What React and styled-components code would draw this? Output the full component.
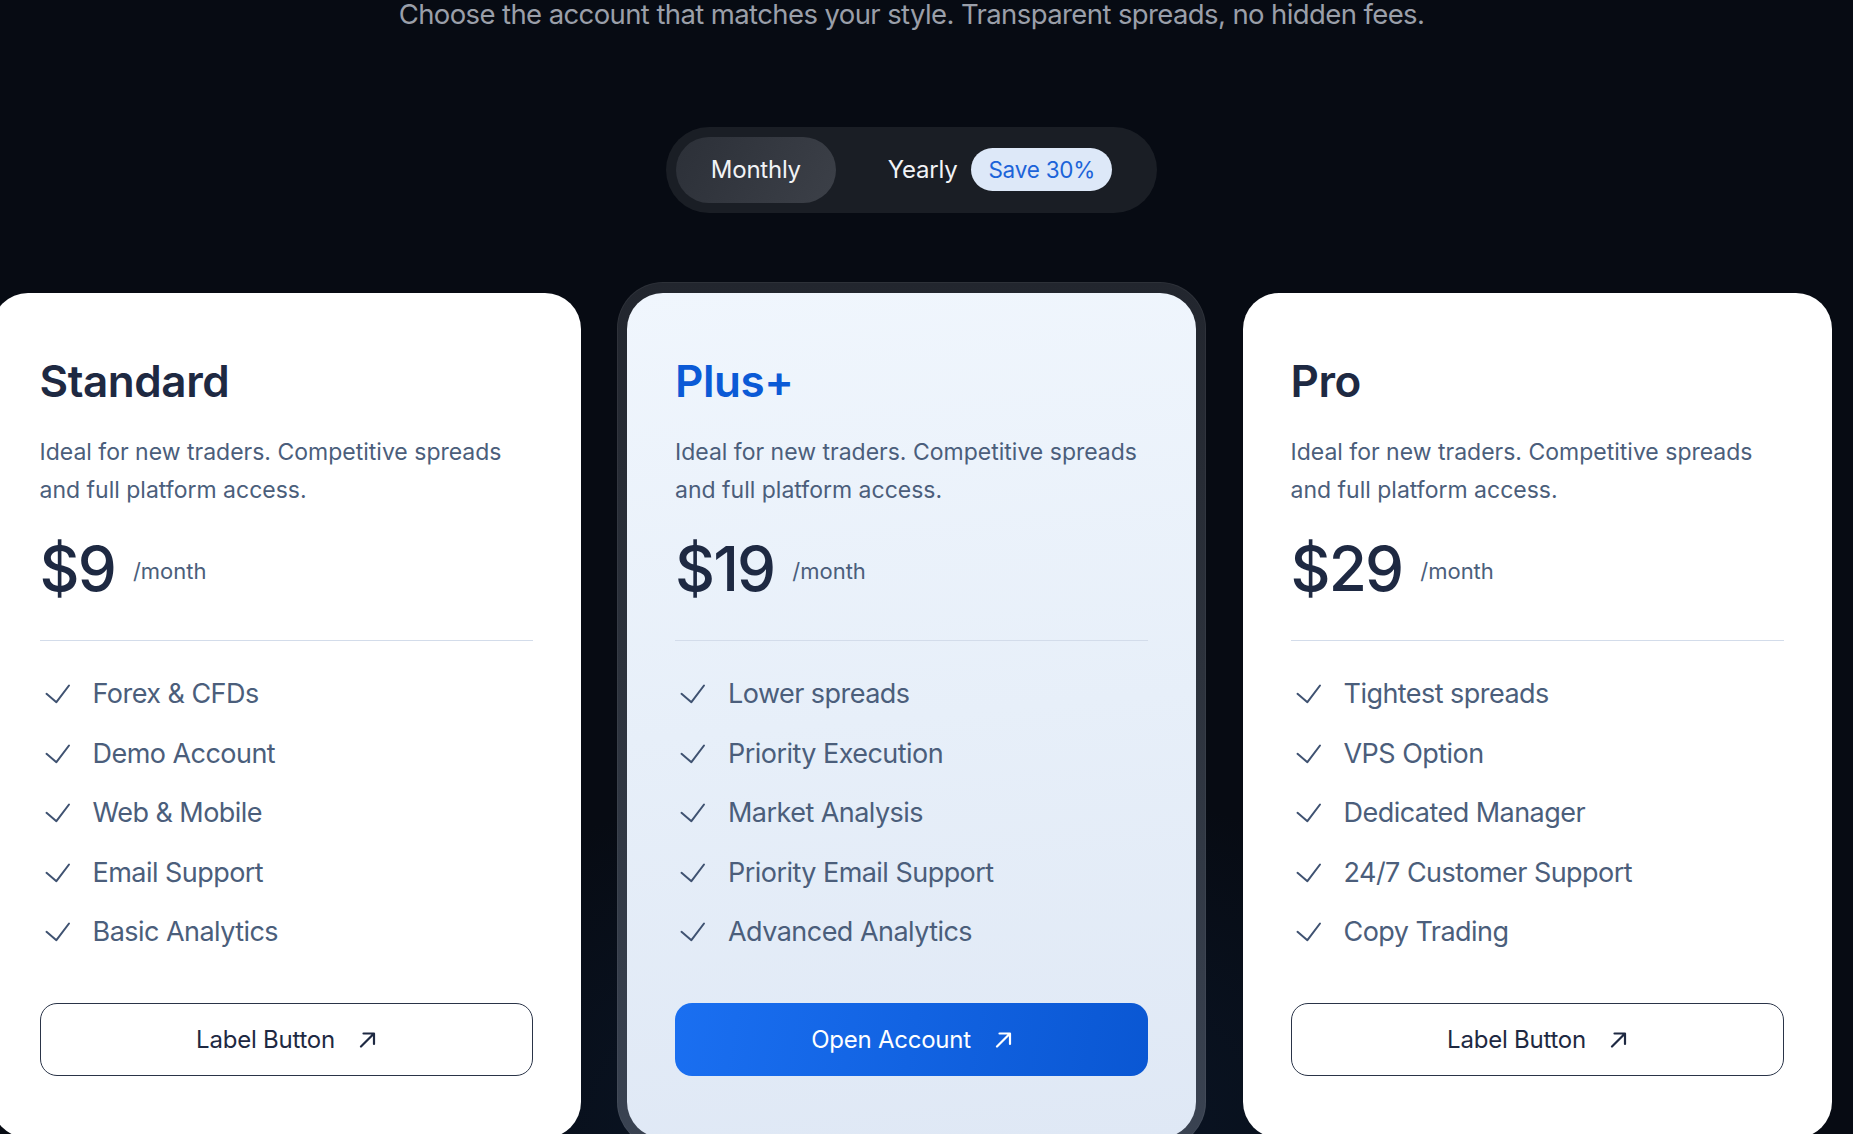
import React from "react";
import styled, { createGlobalStyle } from "styled-components";

const Global = createGlobalStyle`
  html, body {
    margin: 0;
    padding: 0;
    height: 1134px;
    overflow: hidden;
    background: #070b13;
  }
  body {
    font-family: Inter, "Noto Sans", "Liberation Sans", sans-serif;
    -webkit-font-smoothing: antialiased;
  }
  * { box-sizing: border-box; }
`;

const Page = styled.main`
  width: 1853px;
  height: 1134px;
  overflow: hidden;
  display: flex;
  flex-direction: column;
  align-items: center;
  padding-right: 30px;
  background:
    radial-gradient(ellipse 900px 520px at 50% 100%, rgba(14, 34, 62, 0.55), rgba(7, 11, 19, 0) 70%),
    #070b13;
`;

const Subtitle = styled.p`
  margin: 1px 0 0;
  font-size: 27.5px;
  line-height: 1;
  color: #9a9fa9;
  letter-spacing: -0.022em;
  white-space: nowrap;
`;

const Toggle = styled.div`
  margin-top: 98px;
  display: flex;
  align-items: center;
  gap: 17px;
  padding: 10px;
  height: 86px;
  border-radius: 43px;
  background: #1a1e25;
`;

const Pill = styled.button`
  height: 66px;
  display: flex;
  align-items: center;
  gap: 14px;
  padding: 0 35px;
  border: none;
  border-radius: 33px;
  font-family: inherit;
  font-size: 24px;
  font-weight: 400;
  letter-spacing: -0.01em;
  color: #f1f3f6;
  background: ${(p) =>
    p.$active ? "linear-gradient(120deg, #2c3038, #3c4048)" : "transparent"};
`;

const Badge = styled.span`
  display: inline-flex;
  align-items: center;
  height: 43px;
  padding: 0 17px;
  border-radius: 22px;
  background: #dde8f8;
  color: #1b63d9;
  font-size: 22.5px;
  font-weight: 400;
  letter-spacing: -0.01em;
`;

const Grid = styled.section`
  margin-top: 69px;
  flex-shrink: 0;
  width: 1840px;
  display: grid;
  grid-template-columns: repeat(3, 589px);
  column-gap: 36.5px;
  align-items: start;
`;

const Frame = styled.div`
  padding: 11px 10px 10px;
  border-radius: 46px;
  background: linear-gradient(180deg, #22262e 0%, #2c323c 45%, #3a4352 100%);
  box-shadow: inset 0 0 0 1px rgba(255, 255, 255, 0.05);
`;

const Card = styled.article`
  display: flex;
  flex-direction: column;
  padding: 62px 48px 62px;
  border-radius: 36px;
  background: ${(p) =>
    p.$featured
      ? "linear-gradient(175deg, #f0f6fd 0%, #e7eff9 50%, #dfe8f5 100%)"
      : "#ffffff"};
  margin-top: ${(p) => (p.$featured ? "0" : "11px")};
`;

const Title = styled.h2`
  margin: 0;
  font-size: 44px;
  line-height: 1.2;
  font-weight: 600;
  letter-spacing: -0.01em;
  color: ${(p) => (p.$featured ? "#0b5ad6" : "#1e2942")};
`;

const Description = styled.p`
  margin: 27px 0 0;
  font-size: 23px;
  line-height: 37.6px;
  color: #4b5e7b;
  letter-spacing: 0;
`;

const PriceRow = styled.div`
  margin-top: 29px;
  display: flex;
  align-items: center;
  gap: 18px;
  padding-bottom: 40px;
  border-bottom: 1px solid #d3dcea;
`;

const Price = styled.span`
  font-size: 62px;
  line-height: 1;
  font-weight: 500;
  color: #1e2942;
  letter-spacing: -0.03em;
`;

const Period = styled.span`
  font-size: 22px;
  color: #4b5e7b;
  padding-top: 4px;
`;

const FeatureList = styled.ul`
  list-style: none;
  margin: 32px 0 0;
  padding: 0;
  display: flex;
  flex-direction: column;
  gap: 17.5px;
`;

const Feature = styled.li`
  display: flex;
  align-items: center;
  gap: 21px;
  font-size: 27px;
  line-height: 42px;
  color: #4b5e7b;
  letter-spacing: -0.02em;
`;

const ActionButton = styled.button`
  margin-top: 50px;
  height: 73px;
  width: 100%;
  display: flex;
  align-items: center;
  justify-content: center;
  gap: 24px;
  border-radius: 17px;
  font-family: inherit;
  font-size: 24px;
  font-weight: 400;
  letter-spacing: -0.01em;
  cursor: pointer;
  border: ${(p) => (p.$primary ? "none" : "1.5px solid #2a3448")};
  color: ${(p) => (p.$primary ? "#ffffff" : "#1e2942")};
  background: ${(p) =>
    p.$primary ? "linear-gradient(100deg, #1a6ff1 0%, #0a57d3 100%)" : "transparent"};
`;

const CheckIcon = () => (
  <svg width="32" height="32" viewBox="0 0 32 32" fill="none" aria-hidden="true">
    <path
      d="M6.5 15.8 L16.4 24.2 L29 7.5"
      stroke="#3f5271"
      strokeWidth="2"
      strokeLinecap="round"
      strokeLinejoin="round"
    />
  </svg>
);

const ArrowIcon = () => (
  <svg width="17" height="17" viewBox="0 0 17 17" fill="none" aria-hidden="true">
    <path
      d="M2 15.5 L14.5 3 M4.5 2.5 H15 V13"
      stroke="currentColor"
      strokeWidth="2.2"
      strokeLinecap="round"
      strokeLinejoin="round"
    />
  </svg>
);

const plans = [
  {
    name: "Standard",
    price: "$9",
    features: ["Forex & CFDs", "Demo Account", "Web & Mobile", "Email Support", "Basic Analytics"],
    cta: "Label Button",
  },
  {
    name: "Plus+",
    price: "$19",
    featured: true,
    features: [
      "Lower spreads",
      "Priority Execution",
      "Market Analysis",
      "Priority Email Support",
      "Advanced Analytics",
    ],
    cta: "Open Account",
  },
  {
    name: "Pro",
    price: "$29",
    features: [
      "Tightest spreads",
      "VPS Option",
      "Dedicated Manager",
      "24/7 Customer Support",
      "Copy Trading",
    ],
    cta: "Label Button",
  },
];

const PlanCard = ({ plan }) => (
  <Card $featured={plan.featured}>
    <Title $featured={plan.featured}>{plan.name}</Title>
    <Description>
      Ideal for new traders. Competitive spreads and full platform access.
    </Description>
    <PriceRow>
      <Price>{plan.price}</Price>
      <Period>/month</Period>
    </PriceRow>
    <FeatureList>
      {plan.features.map((f) => (
        <Feature key={f}>
          <CheckIcon />
          {f}
        </Feature>
      ))}
    </FeatureList>
    <ActionButton $primary={plan.featured}>
      {plan.cta}
      <ArrowIcon />
    </ActionButton>
  </Card>
);

export default function App() {
  return (
    <>
      <Global />
      <Page>
        <Subtitle>
          Choose the account that matches your style. Transparent spreads, no hidden fees.
        </Subtitle>
        <Toggle>
          <Pill $active>Monthly</Pill>
          <Pill>
            Yearly
            <Badge>Save 30%</Badge>
          </Pill>
        </Toggle>
        <Grid>
          {plans.map((plan) =>
            plan.featured ? (
              <Frame key={plan.name}>
                <PlanCard plan={plan} />
              </Frame>
            ) : (
              <PlanCard key={plan.name} plan={plan} />
            )
          )}
        </Grid>
      </Page>
    </>
  );
}
